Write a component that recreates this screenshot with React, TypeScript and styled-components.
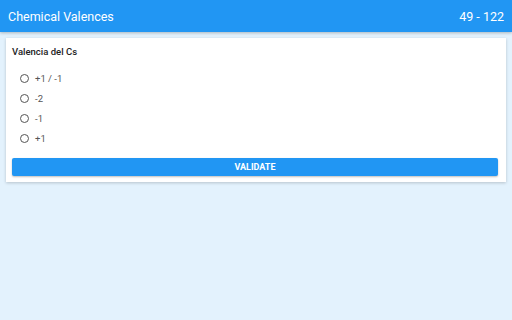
import React from "react";
import styled, { createGlobalStyle } from "styled-components";

const Global = createGlobalStyle`
  html, body { margin: 0; padding: 0; }
  body { background: #e3f2fd; font-family: Roboto, "Noto Sans", sans-serif; }
  #root { min-height: 320px; }
`;

const Page = styled.div`
  width: 512px;
  height: 320px;
  background: #e3f2fd;
  display: flex;
  flex-direction: column;
`;

const AppBar = styled.header`
  height: 32px;
  flex: none;
  background: #2196f3;
  color: #fff;
  display: flex;
  align-items: center;
  justify-content: space-between;
  padding: 0 8px;
  box-shadow: 0 1px 3px rgba(0, 0, 0, 0.25);
  font-size: 12.5px;
`;

const Title = styled.span``;

const Score = styled.span`
  font-size: 12.5px;
`;

const Card = styled.section`
  margin: 6px 6px 0;
  background: #fff;
  box-shadow: 0 1px 3px rgba(0, 0, 0, 0.2);
  padding: 7px 8px 6px 6px;
  display: flex;
  flex-direction: column;
`;

const Question = styled.div`
  font-size: 9.5px;
  font-weight: 500;
  color: #222;
  line-height: 13px;
  margin-bottom: 14px;
`;

const Options = styled.div`
  display: flex;
  flex-direction: column;
  gap: 7px;
  padding-left: 8px;
  margin-bottom: 13px;
`;

const Option = styled.label`
  display: flex;
  align-items: center;
  gap: 6px;
  height: 13px;
  font-size: 9.5px;
  color: #555;
`;

const Radio = styled.span`
  width: 7px;
  height: 7px;
  border: 1.2px solid #555;
  border-radius: 50%;
  flex: none;
`;

const Button = styled.button`
  height: 18px;
  border: none;
  border-radius: 2px;
  background: #2196f3;
  color: #fff;
  font-family: Roboto, sans-serif;
  font-weight: 700;
  font-size: 9px;
  box-shadow: 0 1px 2px rgba(0, 0, 0, 0.25);
  padding: 0;
`;

const options = ["+1 / -1", "-2", "-1", "+1"];

export default function App() {
  return (
    <>
      <Global />
      <Page>
        <AppBar>
          <Title>Chemical Valences</Title>
          <Score>49 - 122</Score>
        </AppBar>
        <Card>
          <Question>Valencia del Cs</Question>
          <Options>
            {options.map((o) => (
              <Option key={o}>
                <Radio />
                {o}
              </Option>
            ))}
          </Options>
          <Button>VALIDATE</Button>
        </Card>
      </Page>
    </>
  );
}
